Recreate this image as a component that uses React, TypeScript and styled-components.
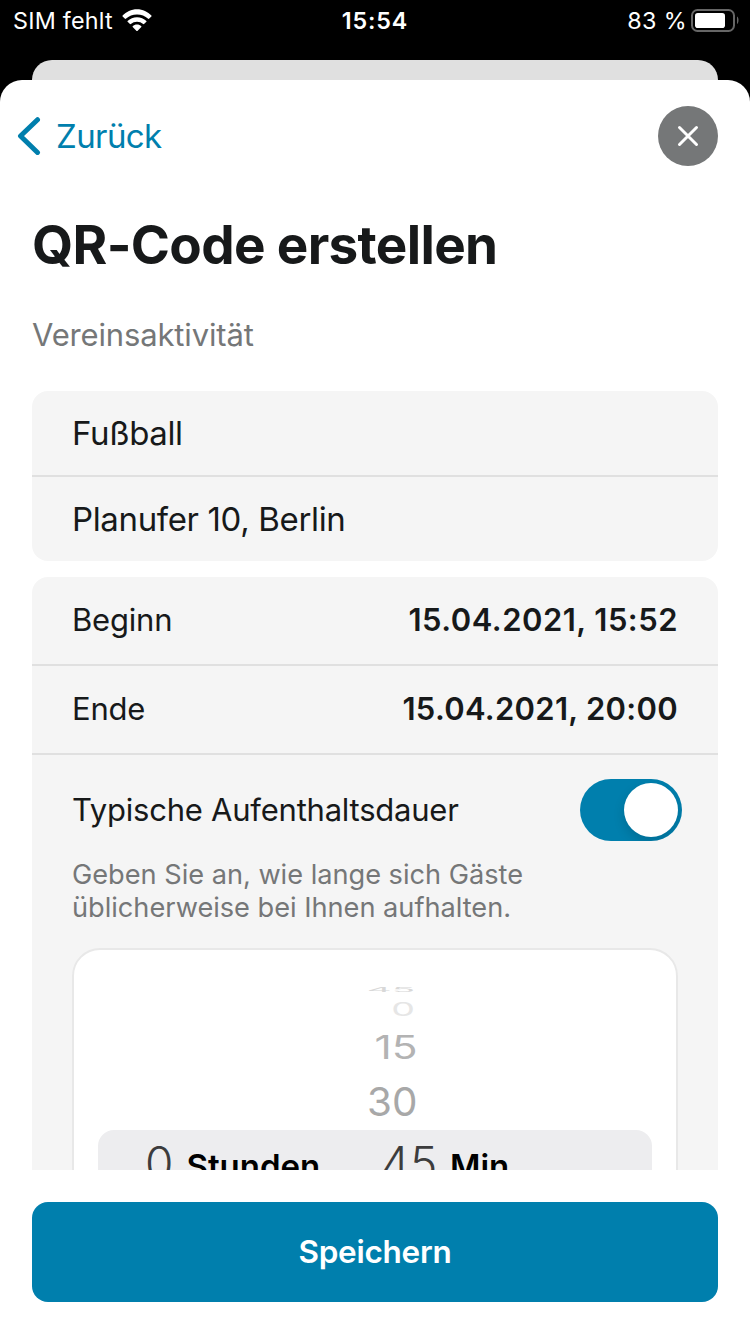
import React from "react";
import styled, { createGlobalStyle } from "styled-components";

const GlobalStyle = createGlobalStyle`
  * { box-sizing: border-box; }
  body {
    margin: 0;
    background: #000;
    font-family: Inter, "Liberation Sans", sans-serif;
    color: #17191a;
  }
`;

const Screen = styled.div`
  display: flex;
  flex-direction: column;
  width: 750px;
  height: 1334px;
  overflow: hidden;
  background: #000;
`;

const StatusBar = styled.header`
  display: grid;
  grid-template-columns: 1fr auto 1fr;
  align-items: center;
  height: 41px;
  padding: 0 11px 0 13px;
  margin-bottom: 19px;
  color: #fff;
  font-size: 23.3px;
`;

const StatusSide = styled.div<{ $end?: boolean }>`
  display: flex;
  align-items: center;
  justify-content: ${(p) => (p.$end ? "flex-end" : "flex-start")};
  gap: ${(p) => (p.$end ? 4 : 9)}px;
  letter-spacing: ${(p) => (p.$end ? 0.35 : 0.24)}px;
`;

const Clock = styled.time`
  margin-right: 2px;
  font-weight: 600;
  letter-spacing: 0.85px;
`;

const SheetBehind = styled.div`
  flex: none;
  height: 20px;
  margin: 0 32px;
  border-radius: 20px 20px 0 0;
  background: #e0e0e0;
`;

const Sheet = styled.main`
  display: flex;
  flex-direction: column;
  flex: 1;
  min-height: 0;
  border-radius: 22px 22px 0 0;
  background: #fff;
`;

const NavBar = styled.nav`
  display: flex;
  align-items: center;
  justify-content: space-between;
  height: 112px;
  padding: 0 32px 0 17px;
`;

const BackButton = styled.button`
  display: flex;
  align-items: center;
  gap: 15px;
  padding: 0;
  border: 0;
  background: none;
  color: #007fad;
  font: 400 33px/40px Inter, sans-serif;
  letter-spacing: -0.6px;
`;

const CloseButton = styled.button`
  display: grid;
  place-items: center;
  width: 60px;
  height: 60px;
  padding: 0;
  border: 0;
  border-radius: 50%;
  background: #757778;
`;

const Content = styled.section`
  flex: none;
  height: 978px;
  padding: 0 32px;
  overflow: hidden;
`;

const Title = styled.h1`
  margin: 20px 0 0;
  font-size: 53px;
  font-weight: 700;
  line-height: 66px;
  letter-spacing: -0.66px;
`;

const Subtitle = styled.p`
  margin: 37px 0 0;
  color: #757778;
  font-size: 31px;
  line-height: 40px;
  letter-spacing: -0.15px;
`;

const Group = styled.div<{ $top: number }>`
  margin-top: ${(p) => p.$top}px;
  border-radius: 16px;
  background: #f5f5f5;
  overflow: hidden;
`;

const Field = styled.div<{ $last?: boolean }>`
  height: ${(p) => (p.$last ? 84 : 86)}px;
  padding: 0 40px;
  border-bottom: ${(p) => (p.$last ? "0" : "2px solid #e0e0e0")};
  font-size: 33px;
  line-height: 84px;
  letter-spacing: -0.36px;
`;

const DateRow = styled.div`
  display: flex;
  justify-content: space-between;
  height: 89px;
  padding: 0 40px;
  border-bottom: 2px solid #e0e0e0;
  font-size: 31px;
  line-height: 85px;
  letter-spacing: -0.2px;
`;

const DateValue = styled.strong<{ $spacing: number }>`
  font-weight: 600;
  letter-spacing: ${(p) => p.$spacing}px;
`;

const Duration = styled.div`
  padding: 24px 40px 0;
`;

const DurationHead = styled.div`
  display: flex;
  align-items: flex-start;
  justify-content: space-between;
  height: 62px;
  margin-right: -4px;
  font-size: 31px;
  line-height: 61px;
  letter-spacing: -0.23px;
`;

const Switch = styled.span`
  display: flex;
  justify-content: flex-end;
  width: 102px;
  height: 62px;
  padding: 4px;
  border-radius: 31px;
  background: #007fad;
  overflow: hidden;
`;

const Knob = styled.span`
  width: 54px;
  height: 54px;
  border-radius: 50%;
  background: #fff;
  box-shadow: 0 5px 12px rgba(0, 0, 0, 0.14);
`;

const Hint = styled.p`
  margin: 17px 0 0;
  color: #757778;
  font-size: 27.2px;
  line-height: 33px;
  letter-spacing: -0.02px;
  white-space: nowrap;
`;

const Picker = styled.div`
  height: 432px;
  margin-top: 24px;
  padding-top: 30px;
  border: 2px solid #e8e8e8;
  border-radius: 28px;
  background: #fff;
`;

const WheelItem = styled.div<{ $height: number; $x: number; $y: number; $right: number; $color: string }>`
  height: ${(p) => p.$height}px;
  margin-right: ${(p) => p.$right}px;
  color: ${(p) => p.$color};
  font-size: 40px;
  line-height: ${(p) => p.$height}px;
  text-align: right;
  transform: scale(${(p) => p.$x}, ${(p) => p.$y});
  transform-origin: right center;
`;

const Selection = styled.div`
  display: grid;
  grid-template-columns: 41.5px 194.5px 69px auto;
  height: 68px;
  margin: 4px 24px 0;
  padding-left: 47px;
  border-radius: 16px;
  background: #ededef;
`;

const Amount = styled.span`
  color: #3c3c3d;
  font-size: 46px;
  font-weight: 350;
  line-height: 67px;
`;

const Unit = styled.strong`
  color: #000;
  font-size: 33px;
  font-weight: 600;
  line-height: 72px;
`;

const Footer = styled.footer`
  padding: 32px;
`;

const SaveButton = styled.button`
  display: block;
  width: 100%;
  height: 100px;
  border: 0;
  border-radius: 16px;
  background: #007fad;
  color: #fff;
  font: 600 31.5px/40px Inter, sans-serif;
  letter-spacing: -0.26px;
`;

const WifiIcon = () => (
  <svg width="30" height="23" viewBox="0 0 30 23" fill="#fff">
    <path d="M15 0.3C9.300 0.3 4.200 2.800 0.600 6.600Q0.300 7 0.600 7.400L3 9.800Q3.400 10.100 3.800 9.800A16.500 16.500 0 0 1 26.200 9.800Q26.600 10.100 27 9.800L29.400 7.400Q29.700 7 29.400 6.600C25.800 2.800 20.700 0.3 15 0.3Z" />
    <path d="M15 8.200C11.400 8.200 8.100 9.600 5.600 11.900Q5.200 12.300 5.600 12.700L8 15.100Q8.400 15.400 8.800 15.100A9.200 9.200 0 0 1 21.200 15.100Q21.600 15.400 22 15.100L24.400 12.700Q24.800 12.300 24.400 11.900C21.900 9.600 18.600 8.200 15 8.200Z" />
    <path d="M15 15.500C13.300 15.500 11.800 16.200 10.700 17.200Q10.300 17.600 10.700 18L14.600 21.900Q15 22.200 15.400 21.900L19.300 18Q19.700 17.600 19.300 17.200C18.200 16.200 16.700 15.500 15 15.500Z" />
  </svg>
);

const BatteryIcon = () => (
  <svg width="48" height="24" viewBox="0 0 48 24">
    <rect x="1" y="1" width="42" height="21" rx="5.500" fill="none" stroke="#666" strokeWidth="2" />
    <rect x="4" y="4" width="30" height="15" rx="2.800" fill="#fff" />
    <path d="M46 7.500c2 1 2 6.500 0 7.500z" fill="#666" />
  </svg>
);

const BackIcon = () => (
  <svg width="24" height="38" viewBox="0 0 24 38" fill="none" stroke="#007fad" strokeWidth="5" strokeLinecap="round" strokeLinejoin="round">
    <path d="M20.500 2.700L3.500 19l17 16.500" />
  </svg>
);

const CloseIcon = () => (
  <svg width="22" height="22" viewBox="0 0 22 22" stroke="#fff" strokeWidth="3" strokeLinecap="round">
    <path d="M2.500 2.500l17 17M19.500 2.500l-17 17" />
  </svg>
);

export default function App() {
  return (
    <Screen>
      <GlobalStyle />
      <StatusBar>
        <StatusSide>SIM fehlt<WifiIcon /></StatusSide>
        <Clock>15:54</Clock>
        <StatusSide $end>83 %<BatteryIcon /></StatusSide>
      </StatusBar>
      <SheetBehind />
      <Sheet>
        <NavBar>
          <BackButton><BackIcon />Zurück</BackButton>
          <CloseButton aria-label="Schließen"><CloseIcon /></CloseButton>
        </NavBar>
        <Content>
          <Title>QR-Code erstellen</Title>
          <Subtitle>Vereinsaktivität</Subtitle>
          <Group $top={36}>
            <Field>Fußball</Field>
            <Field $last>Planufer 10, Berlin</Field>
          </Group>
          <Group $top={16}>
            <DateRow>Beginn<DateValue $spacing={0.48}>15.04.2021, 15:52</DateValue></DateRow>
            <DateRow>Ende<DateValue $spacing={0.29}>15.04.2021, 20:00</DateValue></DateRow>
            <Duration>
              <DurationHead>Typische Aufenthaltsdauer<Switch><Knob /></Switch></DurationHead>
              <Hint>Geben Sie an, wie lange sich Gäste<br />üblicherweise bei Ihnen aufhalten.</Hint>
              <Picker>
                <WheelItem $height={20} $x={0.96} $y={0.15} $right={261} $color="#d8d8d8">45</WheelItem>
                <WheelItem $height={18} $x={0.94} $y={0.48} $right={261} $color="#e6e6e6">0</WheelItem>
                <WheelItem $height={59} $x={1.06} $y={0.8} $right={258.5} $color="#b3b3b3">15</WheelItem>
                <WheelItem $height={49} $x={1.01} $y={1} $right={258.5} $color="#a8a8a8">30</WheelItem>
                <Selection>
                  <Amount>0</Amount>
                  <Unit>Stunden</Unit>
                  <Amount>45</Amount>
                  <Unit>Min</Unit>
                </Selection>
              </Picker>
            </Duration>
          </Group>
        </Content>
        <Footer>
          <SaveButton>Speichern</SaveButton>
        </Footer>
      </Sheet>
    </Screen>
  );
}
